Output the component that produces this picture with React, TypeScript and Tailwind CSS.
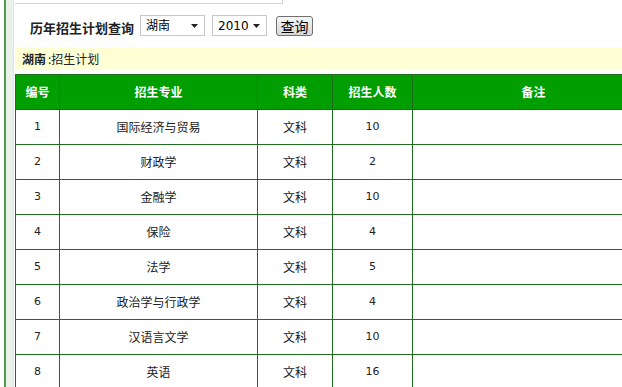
const rows = [
  { id: 1, major: '国际经济与贸易', kind: '文科', count: 10 },
  { id: 2, major: '财政学', kind: '文科', count: 2 },
  { id: 3, major: '金融学', kind: '文科', count: 10 },
  { id: 4, major: '保险', kind: '文科', count: 4 },
  { id: 5, major: '法学', kind: '文科', count: 5 },
  { id: 6, major: '政治学与行政学', kind: '文科', count: 4 },
  { id: 7, major: '汉语言文学', kind: '文科', count: 10 },
  { id: 8, major: '英语', kind: '文科', count: 16 },
];

const cjk = "font-['SimSun','Noto_Sans_CJK_SC',sans-serif]";

const FakeSelect = ({ value, width }: { value: string; width: string }) => (
  <div
    className={`${width} h-[21px] border border-[#c8c8c8] bg-white flex items-center justify-between pl-[5px] pr-[6px] text-[12px] text-black`}
  >
    <span className="font-['DejaVu_Sans','Noto_Sans_CJK_SC',sans-serif] leading-none">{value}</span>
    <svg width="7" height="4" viewBox="0 0 7 4">
      <path d="M0 0h7L3.5 4z" fill="#222" />
    </svg>
  </div>
);

const App = () => {
  return (
    <div className={`w-[622px] h-[387px] overflow-hidden bg-white flex ${cjk}`}>
      <div className="w-[4px] shrink-0 bg-white" />
      <div className="w-[2px] shrink-0 bg-[#4c9c4c]" />
      <div className="w-[8px] shrink-0 bg-[#eaf0ea] border-r border-[#dfe6df]" />

      <div className="flex-1 min-w-0 pl-[1px]">
        <div className="w-[268px] h-[4px] border-b border-r border-[#d4d4d4]" />

        <div className="flex items-center h-[21px] mt-[11px]">
          <span className="ml-[15px] text-[13px] font-bold text-[#222] mt-[4px]">历年招生计划查询</span>
          <div className="ml-[6px]">
            <FakeSelect value="湖南" width="w-[65px]" />
          </div>
          <div className="ml-[7px]">
            <FakeSelect value="2010" width="w-[55px]" />
          </div>
          <button className="ml-[9px] w-[37px] h-[20px] rounded-[3px] border border-[#707070] bg-gradient-to-b from-[#f6f6f6] to-[#d8d8d8] text-[14px] leading-none text-black flex items-center justify-center">
            查询
          </button>
        </div>

        <div className="mt-[11px] h-[23px] bg-[#ffffd6] flex items-center pl-[7px] text-[12px] text-[#222]">
          <span className="font-bold">湖南</span>
          <span className="ml-[2px]">:招生计划</span>
        </div>

        <table className="mt-[4px] w-[640px] table-fixed border-collapse text-[12px]">
          <colgroup>
            <col className="w-[44px]" />
            <col className="w-[198px]" />
            <col className="w-[75px]" />
            <col className="w-[80px]" />
            <col />
          </colgroup>
          <thead>
            <tr className="h-[35px] bg-[#009e00] text-white font-bold">
              <th className="border border-[#1f6e1f]">编号</th>
              <th className="border border-[#1f6e1f]">招生专业</th>
              <th className="border border-[#1f6e1f]">科类</th>
              <th className="border border-[#1f6e1f]">招生人数</th>
              <th className="border border-[#1f6e1f]">备注</th>
            </tr>
          </thead>
          <tbody>
            {rows.map(r => (
              <tr key={r.id} className="h-[35px] text-[#222]">
                <td className="border border-[#1f6e1f] text-center text-[11px] font-['DejaVu_Sans',sans-serif]">{r.id}</td>
                <td className="border border-[#1f6e1f] text-center">{r.major}</td>
                <td className="border border-[#1f6e1f] text-center">{r.kind}</td>
                <td className="border border-[#1f6e1f] text-center text-[11px] font-['DejaVu_Sans',sans-serif]">{r.count}</td>
                <td className="border border-[#1f6e1f]"></td>
              </tr>
            ))}
          </tbody>
        </table>
      </div>
    </div>
  );
};

export default App;
